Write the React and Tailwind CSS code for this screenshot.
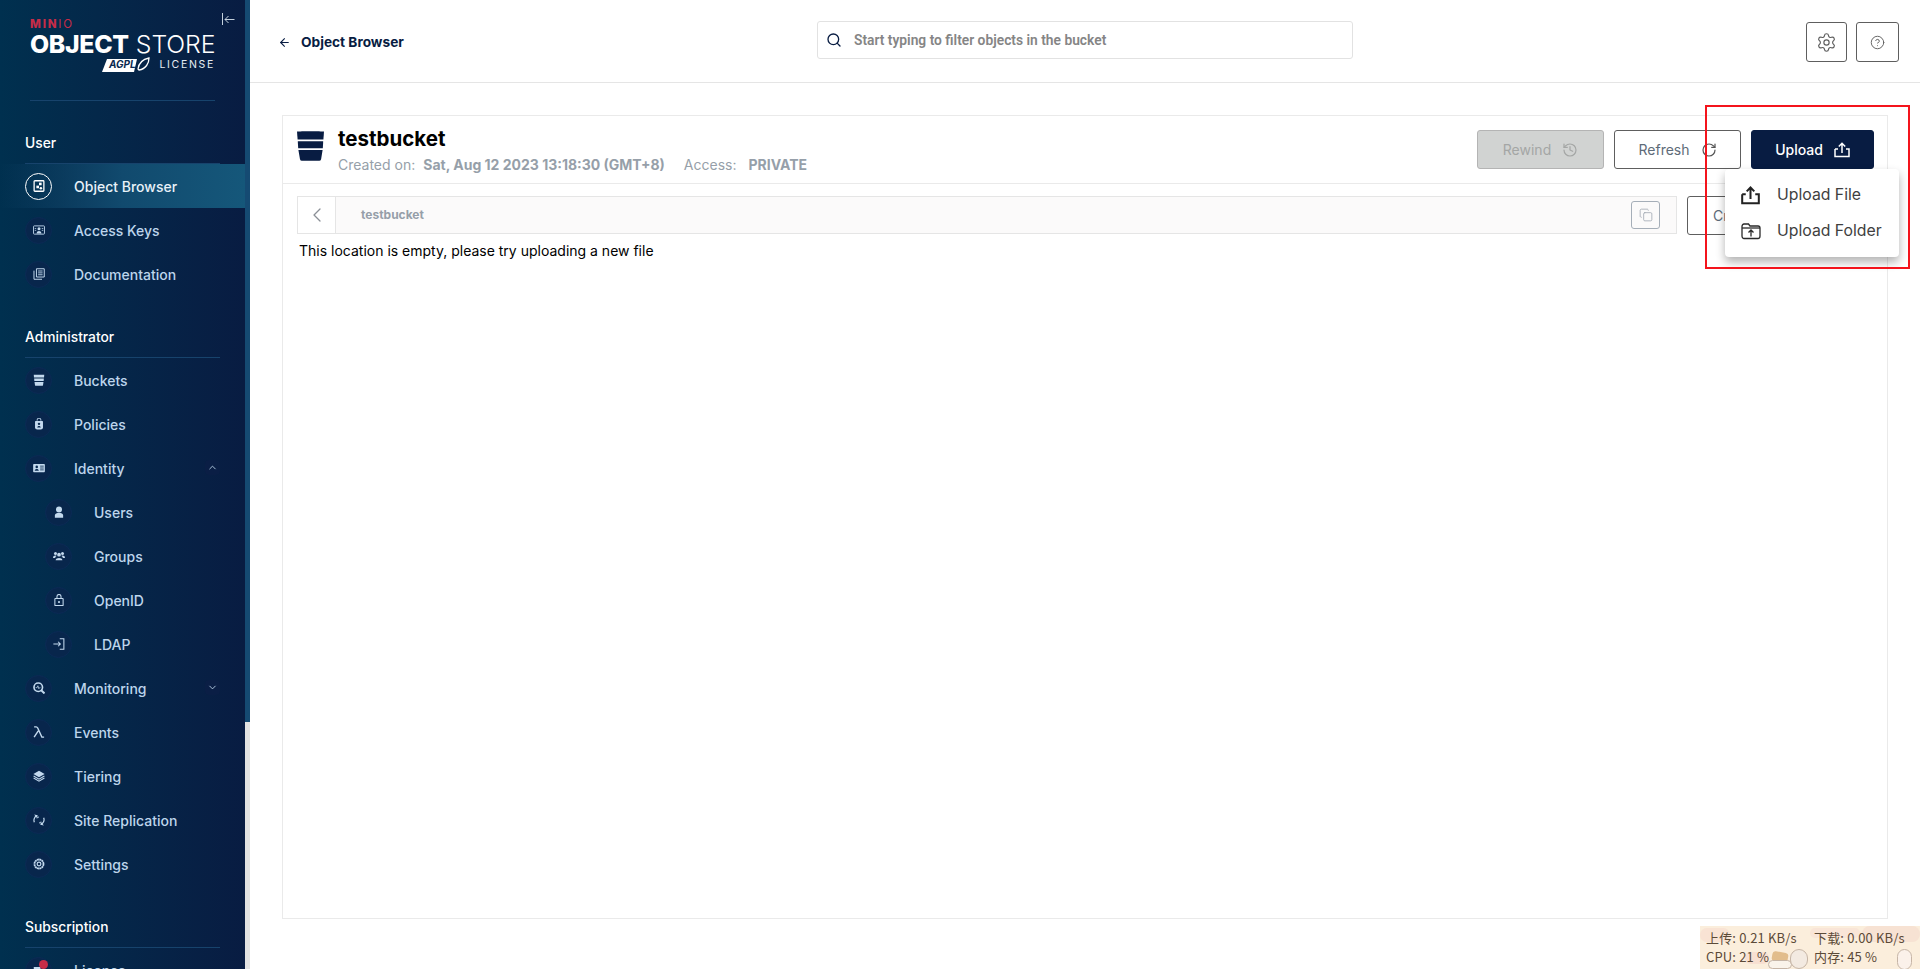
import React from "react";
import { ArrowLeft, ChevronLeft, ChevronUp, ChevronDown, Search, Settings, CircleHelp, Copy, History, RotateCw } from "lucide-react";

const S = ({ children, size = 12, vb = "0 0 16 16", className = "" }) => (
  <svg width={size} height={size} viewBox={vb} className={className} fill="currentColor">{children}</svg>
);

const icons = {
  object: <S><rect x="1.500" y="1" width="13" height="14" rx="1" fill="none" stroke="currentColor" strokeWidth="1.700" /><rect x="8" y="3.500" width="3.500" height="3.500" /><rect x="4.500" y="7.500" width="3.500" height="3.500" /><circle cx="10.500" cy="11" r="1.700" /></S>,
  keys: <S><rect x=".7" y="2.500" width="14.600" height="11" rx="1" fill="none" stroke="currentColor" strokeWidth="1.200" /><circle cx="8" cy="6.300" r="2" /><path d="M4.800 12.500c0-4.400 6.400-4.400 6.400 0z" /><path d="M2.300 6h2M2.300 8.500h2M11.700 6h2M11.700 8.500h2" stroke="currentColor" strokeWidth="1" /></S>,
  docs: <S><path d="M4.600 1h10.400v11H4.600z" fill="none" stroke="currentColor" strokeWidth="1.300" /><path d="M1.300 3.500V15H12" fill="none" stroke="currentColor" strokeWidth="1.300" /><path d="M6.800 4h6M6.800 6.500h6M6.800 9h6" stroke="currentColor" strokeWidth="1.200" /></S>,
  buckets: <S><path d="M1 1h14l-.3 3.700H1.300z" /><path d="M1.500 6h13l-.3 3.300H1.800z" /><path d="M2 10.600h12l-.7 4.300a1 1 0 0 1-1 .7H3.700a1 1 0 0 1-1-.7z" /></S>,
  policies: <S><path d="M5.500 3.500V2.600a2.500 2.500 0 0 1 5 0v.9" fill="none" stroke="currentColor" strokeWidth="1.300" /><path d="M3.500 4h9a.8.8 0 0 1 .8.8v7.400a3 3 0 0 1-3 3H5.700a3 3 0 0 1-3-3V4.800A.8.8 0 0 1 3.500 4z" /><circle cx="8" cy="7.800" r="1.600" fill="#0a2a50" /><path d="M5.600 12.800c0-2.800 4.800-2.800 4.800 0z" fill="#0a2a50" /></S>,
  identity: <S><path d="M1.200 2.500h13.600a1 1 0 0 1 1 1v9a1 1 0 0 1-1 1H1.200a1 1 0 0 1-1-1v-9a1 1 0 0 1 1-1z" /><circle cx="5" cy="6.500" r="1.700" fill="#0a2a50" /><path d="M2.300 11.500c0-3 5.400-3 5.400 0z" fill="#0a2a50" /><path d="M9.500 5.500h4.800M9.500 8h4.800M9.500 10.500h4.800" stroke="#0a2a50" strokeWidth="1.100" /></S>,
  users: <S><circle cx="8" cy="4.500" r="4" /><path d="M2.500 15.500v-3C2.500 10 5 9.300 8 9.300s5.500.7 5.500 3.200v3z" /></S>,
  groups: <S><circle cx="8" cy="6.300" r="2.500" /><path d="M3.500 13.500c0-3.800 9-3.800 9 0z" /><circle cx="3.300" cy="4.800" r="2" /><circle cx="12.700" cy="4.800" r="2" /><path d="M0 10.500c0-3 3.400-3.600 4.800-2.500-1 .6-1.800 1.400-2 2.500zM16 10.500c0-3-3.400-3.600-4.800-2.500 1 .6 1.800 1.400 2 2.500z" /></S>,
  openid: <S><rect x="2.500" y="6" width="11" height="9.500" rx=".6" fill="none" stroke="currentColor" strokeWidth="1.400" /><path d="M5.300 6V3.300a2.700 2.700 0 0 1 5.400 0V6" fill="none" stroke="currentColor" strokeWidth="1.400" /><rect x="6.800" y="9.500" width="2.400" height="2.400" /></S>,
  ldap: <S><path d="M9 1h5.500v14H9" fill="none" stroke="currentColor" strokeWidth="1.400" /><path d="M.5 8h9M6.800 5 9.800 8l-3 3" fill="none" stroke="currentColor" strokeWidth="1.400" /></S>,
  monitoring: <S><circle cx="7" cy="7" r="5.700" fill="none" stroke="currentColor" strokeWidth="2.200" /><path d="m11 11 4.300 4.300" stroke="currentColor" strokeWidth="2.600" /><path d="M3.500 7.500h2l1-2.500 1.300 4 1-1.500h1" fill="none" stroke="currentColor" strokeWidth="1" /></S>,
  events: <S><path d="M1.500 1.200h2.700c1.100 0 1.600.5 2.100 1.500L11.800 14.800h3M7 6.500 1.500 14.800" fill="none" stroke="currentColor" strokeWidth="1.900" /></S>,
  tiering: <S><path d="M8 1 15.500 5.300 8 9.600 .5 5.300z" /><path d="M.8 8 8 12.200 15.200 8" fill="none" stroke="currentColor" strokeWidth="1.500" /><path d="M.8 10.700 8 14.900l7.200-4.200" fill="none" stroke="currentColor" strokeWidth="1.500" /></S>,
  site: <S><path d="M1.800 11a7 7 0 0 1 3.400-8.800" fill="none" stroke="currentColor" strokeWidth="1.700" /><path d="M1.500 .8 6.300 1.600l-1 3.800z" /><path d="M14.200 5a7 7 0 0 1-3.400 8.800" fill="none" stroke="currentColor" strokeWidth="1.700" /><path d="m14.500 15.200-4.800-.8 1-3.800z" /><path d="M5 5.500 8 3.800M11 10.500 8 12.200" stroke="currentColor" strokeWidth="1.200" /></S>,
  settings: <S><circle cx="8" cy="8" r="2.500" fill="none" stroke="currentColor" strokeWidth="1.600" /><circle cx="8" cy="8" r="6" fill="none" stroke="currentColor" strokeWidth="2.400" strokeDasharray="2.600 .5" /></S>,
  license: <S><path d="M1 4h9v8H1z" /></S>,
};

function NavItem({ icon, label, active, sub, chevron }) {
  return (
    <div className={`relative flex h-[44px] shrink-0 items-center ${sub ? "pl-[45px]" : "pl-[25px]"} ${active ? "bg-gradient-to-r from-transparent via-[#114a6e] to-[#15577a]" : ""}`}>
      <span className={`flex h-[27px] w-[27px] shrink-0 items-center justify-center rounded-full ${active ? "border border-white text-white" : "border border-[#0b2a55] bg-[#08264c] text-[#c3d9ee]"}`}>
        {icons[icon]}
      </span>
      <span className={`ml-[22px] text-[14px] font-medium ${active ? "text-[#e8f1f8]" : "text-[#bdd5ec]"}`}>{label}</span>
      {chevron && (
        <span className="absolute left-[205px] top-[14px] flex h-[15px] w-[15px] items-center justify-center rounded-sm bg-[#0a1e45] text-[#b8cfe6]">
          {chevron === "up" ? <ChevronUp size={11} /> : <ChevronDown size={11} />}
        </span>
      )}
    </div>
  );
}

function Section({ title, className = "" }) {
  return (
    <div className={`mx-[25px] h-[31px] w-[195px] shrink-0 border-b border-[#17436c] text-[13.800px] leading-[20px] font-medium text-white ${className}`}>{title}</div>
  );
}

function Sidebar() {
  return (
    <aside className="flex h-[969px] w-[245px] shrink-0 flex-col overflow-hidden bg-gradient-to-r from-[#00304f] to-[#081c42]">
      <div className="relative h-[100px] shrink-0 pl-[30px] pt-[18px]">
        <div className="h-[12px] text-[11.500px] leading-[12px] tracking-[1.800px] text-[#c72c48]"><span className="font-extrabold">MIN</span><span className="font-normal">IO</span></div>
        <div className="-mt-px flex h-[30px] items-center whitespace-nowrap text-[24.800px] leading-[30px] text-white">
          <span className="font-extrabold tracking-[-0.3px]">OBJECT</span><span className="ml-[7px] font-light tracking-[-0.1px]">STORE</span>
        </div>
        <div className="-mt-[3px] flex h-[18px] w-[185px] items-center justify-end">
          <svg width="48" height="17" viewBox="0 0 48 17" className="mr-[9px] text-white">
            <path d="M5 2h30l-3 13H0z" fill="currentColor" />
            <text x="7" y="11" fontSize="10" fontWeight="700" fontStyle="italic" fontFamily="Inter" fill="#0a2a50">AGPL</text>
            <path d="M36 12C37 5 42 2 47 1c0 5-3 11-10 12z" fill="none" stroke="currentColor" strokeWidth="1.300" />
          </svg>
          <span className="text-[10.500px] tracking-[1.700px] text-[#e6edf4]">LICENSE</span>
        </div>
        <svg width="13" height="13" viewBox="0 0 13 13" className="absolute left-[222px] top-[13px] text-[#c3d0dc]" fill="none" stroke="currentColor" strokeWidth="1"><path d="M.5 0v12M12.500 6.500H3M6.500 3 3 6.500 6.500 10" /></svg>
      </div>
      <div className="mx-[30px] h-px w-[185px] shrink-0 bg-[#17436c]" />
      <Section title="User" className="mt-[32px]" />
      <NavItem icon="object" label="Object Browser" active />
      <NavItem icon="keys" label="Access Keys" />
      <NavItem icon="docs" label="Documentation" />
      <Section title="Administrator" className="mt-[31px]" />
      <NavItem icon="buckets" label="Buckets" />
      <NavItem icon="policies" label="Policies" />
      <NavItem icon="identity" label="Identity" chevron="up" />
      <NavItem icon="users" label="Users" sub />
      <NavItem icon="groups" label="Groups" sub />
      <NavItem icon="openid" label="OpenID" sub />
      <NavItem icon="ldap" label="LDAP" sub />
      <NavItem icon="monitoring" label="Monitoring" chevron="down" />
      <NavItem icon="events" label="Events" />
      <NavItem icon="tiering" label="Tiering" />
      <NavItem icon="site" label="Site Replication" />
      <NavItem icon="settings" label="Settings" />
      <Section title="Subscription" className="mt-[31px]" />
      <div className="relative">
        <NavItem icon="license" label="License" />
        <span className="absolute left-[39px] top-[12px] h-[9px] w-[9px] rounded-full bg-[#c72c48]" />
      </div>
    </aside>
  );
}

function Btn({ children, className = "" }) {
  return <div className={`flex h-[39px] shrink-0 items-center justify-center rounded-[3px] border text-[14px] ${className}`}>{children}</div>;
}

function UploadFolderIcon() {
  return (
    <svg width="20" height="18" viewBox="0 0 20 18" fill="none" stroke="#2a2a2a" strokeWidth="1.300">
      <path d="M1 4.500C1 3 2 2 3 2h4.500l1.500 2h8c1 0 2 1 2 2v8c0 1.500-1 2.500-2 2.500H3c-1 0-2-1-2-2.500z" />
      <path d="M1 6h18" />
      <path d="M10 14.500V8.500M7.500 10.500 10 8l2.500 2.500" />
    </svg>
  );
}

function UploadIcon({ size = 16, w = 1.800 }) {
  return (
    <svg width={size} height={size} viewBox="0 0 16 16" fill="none" stroke="currentColor" strokeWidth={w}>
      <path d="M8 11V1.500M4.800 4.500 8 1.300l3.200 3.200" />
      <path d="M1 7v7.500h14V7h-3M1 7h3" />
    </svg>
  );
}

function Widget() {
  return (
    <div className="absolute bottom-0 right-0 h-[43px] w-[220px] overflow-hidden bg-[#fbeedc] px-[6px] pt-[2px] text-[13px] leading-[19px] text-[#5c4a38] [font-family:'Noto_Sans_CJK_SC','Liberation_Sans',sans-serif]">
      <span className="absolute left-0 top-[2px] h-[14px] w-[30px] rounded-full bg-[#f7d8cc] opacity-50" />
      <span className="absolute left-[45px] top-[26px] h-[12px] w-[24px] rounded-full bg-[#f6d2c8] opacity-50" />
      <span className="absolute left-[110px] top-[2px] h-[10px] w-[50px] rounded-full bg-[#f8e0d4] opacity-60" />
      <span className="absolute right-0 top-0 h-[16px] w-[58px] rounded-full bg-[#f3d6ca] opacity-50" />
      <span className="absolute left-[72px] top-[26px] h-[10px] w-[16px] rotate-[10deg] rounded-[3px] bg-[#e2bd8c]" />
      <span className="absolute left-[68px] top-[34px] h-[9px] w-[24px] rounded-full border border-[#c6b5a6] bg-[#faf3ea]" />
      <span className="absolute left-[90px] top-[23px] h-[20px] w-[18px] rounded-full border border-[#c6b5a6] bg-[#f3eae1]" />
      <span className="absolute right-[8px] top-[23px] h-[21px] w-[15px] rounded-full border border-[#c6b5a6] bg-[#fbf1ea]" />
      <div className="relative grid grid-cols-[108px_1fr] whitespace-nowrap tracking-[0.150px]">
        <span>上传: 0.21 KB/s</span><span>下载: 0.00 KB/s</span>
        <span>CPU: 21 %</span><span>内存: 45 %</span>
      </div>
    </div>
  );
}

export default function App() {
  return (
    <div className="relative flex h-[969px] w-[1920px] overflow-hidden bg-white [font-family:Inter,'Liberation_Sans',sans-serif]">
      <Sidebar />
      <div className="flex h-full w-[5px] shrink-0 flex-col bg-[#e2e2e2]">
        <div className="h-[722px] bg-[#154a72]" />
      </div>
      <main className="flex min-w-0 flex-1 flex-col">
        <header className="flex h-[83px] shrink-0 items-start border-b border-[#e5e5e5]">
          <div className="ml-[28px] mt-[32px] flex w-[539px] items-center text-[#081c42]">
            <ArrowLeft size={13} strokeWidth={2} />
            <span className="ml-[10px] text-[13.700px] font-bold">Object Browser</span>
          </div>
          <div className="mt-[21px] flex h-[38px] w-[536px] items-center rounded-[3px] border border-[#e2e2e2] pl-[8px] text-[#081c42]">
            <Search size={16} strokeWidth={2} />
            <span className="ml-[12px] text-[13.800px] font-semibold text-[#858585] [font-family:Roboto,sans-serif]">Start typing to filter objects in the bucket</span>
          </div>
          <Btn className="ml-[453px] mt-[22px] h-[40px] w-[41px] border-[#5e5e5e] text-[#5e5e5e]"><Settings size={21} strokeWidth={1.300} /></Btn>
          <Btn className="ml-[9px] mt-[22px] h-[40px] w-[43px] border-[#5e5e5e] text-[#5e5e5e]"><CircleHelp size={15} strokeWidth={1.500} /></Btn>
        </header>
        <section className="mx-[32px] mt-[32px] flex h-[804px] flex-col border border-[#eaeaea]">
          <div className="flex h-[68px] shrink-0 items-start border-b border-[#eaeaea]">
            <svg width="29" height="30" viewBox="0 0 29 30" className="ml-[13px] mt-[15px] shrink-0 text-[#081c42]" fill="currentColor">
              <path d="M1 .5c3-.5 24-.5 27 0l-.6 8H1.600z" />
              <path d="M1.800 10.200h25.400l-.4 7H2.200z" />
              <path d="M2.400 19h24.200l-1.500 9.300a2 2 0 0 1-2 1.500H6a2 2 0 0 1-2-1.500z" />
            </svg>
            <div className="ml-[13px] mt-[9px] flex flex-col">
              <div className="h-[28px] text-[20.500px] leading-[28px] font-bold text-black">testbucket</div>
              <div className="mt-[2px] whitespace-nowrap text-[14px] leading-[20px] text-[#969fa9]">
                Created on:<span className="ml-[8px] font-bold">Sat, Aug 12 2023 13:18:30 (GMT+8)</span>
                <span className="ml-[19px]">Access:</span><span className="ml-[12px] font-bold">PRIVATE</span>
              </div>
            </div>
            <div className="ml-auto mr-[13px] mt-[14px] flex gap-[10px]">
              <Btn className="w-[127px] border-[#b4b4b4] bg-[#d1d3d2] text-[#a4a6a5]">Rewind<History size={16} strokeWidth={1.800} className="ml-[11px]" /></Btn>
              <Btn className="w-[127px] border-[#5e5e5e] text-[#5e6b78]">Refresh<RotateCw size={16} strokeWidth={1.800} className="ml-[11px] text-[#555]" /></Btn>
              <Btn className="w-[123px] border-[#081c42] bg-[#081c42] font-medium text-white">Upload<span className="ml-[11px]"><UploadIcon size={16} w={1.500} /></span></Btn>
            </div>
          </div>
          <div className="ml-[14px] mt-[12px] flex items-start">
            <div className="flex h-[38px] w-[1380px] items-center border border-[#e5e5e5] bg-[#fbfafa]">
              <div className="flex h-full w-[38px] items-center justify-center border-r border-[#e5e5e5] bg-white text-[#8a8f96]"><ChevronLeft size={24} strokeWidth={1.300} /></div>
              <span className="ml-[25px] text-[12px] font-bold text-[#969fa9]">testbucket</span>
              <div className="ml-auto mr-[16px] flex h-[28px] w-[29px] items-center justify-center rounded-[3px] border border-[#a5aeb8] text-[#9aa3ad]"><Copy size={14} strokeWidth={1.300} /></div>
            </div>
            <div className="ml-[10px] flex h-[39px] w-[120px] items-center rounded-[3px] border border-[#5e5e5e] pl-[25px] text-[14px] text-[#5e6b78]">Create</div>
          </div>
          <div className="ml-[16px] mt-[6px] text-[14px] leading-[20px] text-black">This location is empty, please try uploading a new file</div>
        </section>
      </main>

      <div className="absolute left-[1725px] top-[169px] flex h-[88px] w-[174px] flex-col rounded-[4px] bg-white pb-[6px] pt-[8px] text-[#3f3f3f] shadow-[0_5px_10px_rgba(0,0,0,0.3)]">
        <div className="flex h-[36px] items-center pl-[16px]"><span className="w-[20px] text-[#222]"><UploadIcon size={19} w={1.700} /></span><span className="ml-[16px] text-[15.800px]">Upload File</span></div>
        <div className="flex h-[36px] items-center pl-[16px]"><UploadFolderIcon /><span className="ml-[16px] text-[15.800px]">Upload Folder</span></div>
      </div>
      <div className="pointer-events-none absolute left-[1705px] top-[105px] h-[164px] w-[205px] border-2 border-[#f4141c]" />
      <Widget />
    </div>
  );
}
